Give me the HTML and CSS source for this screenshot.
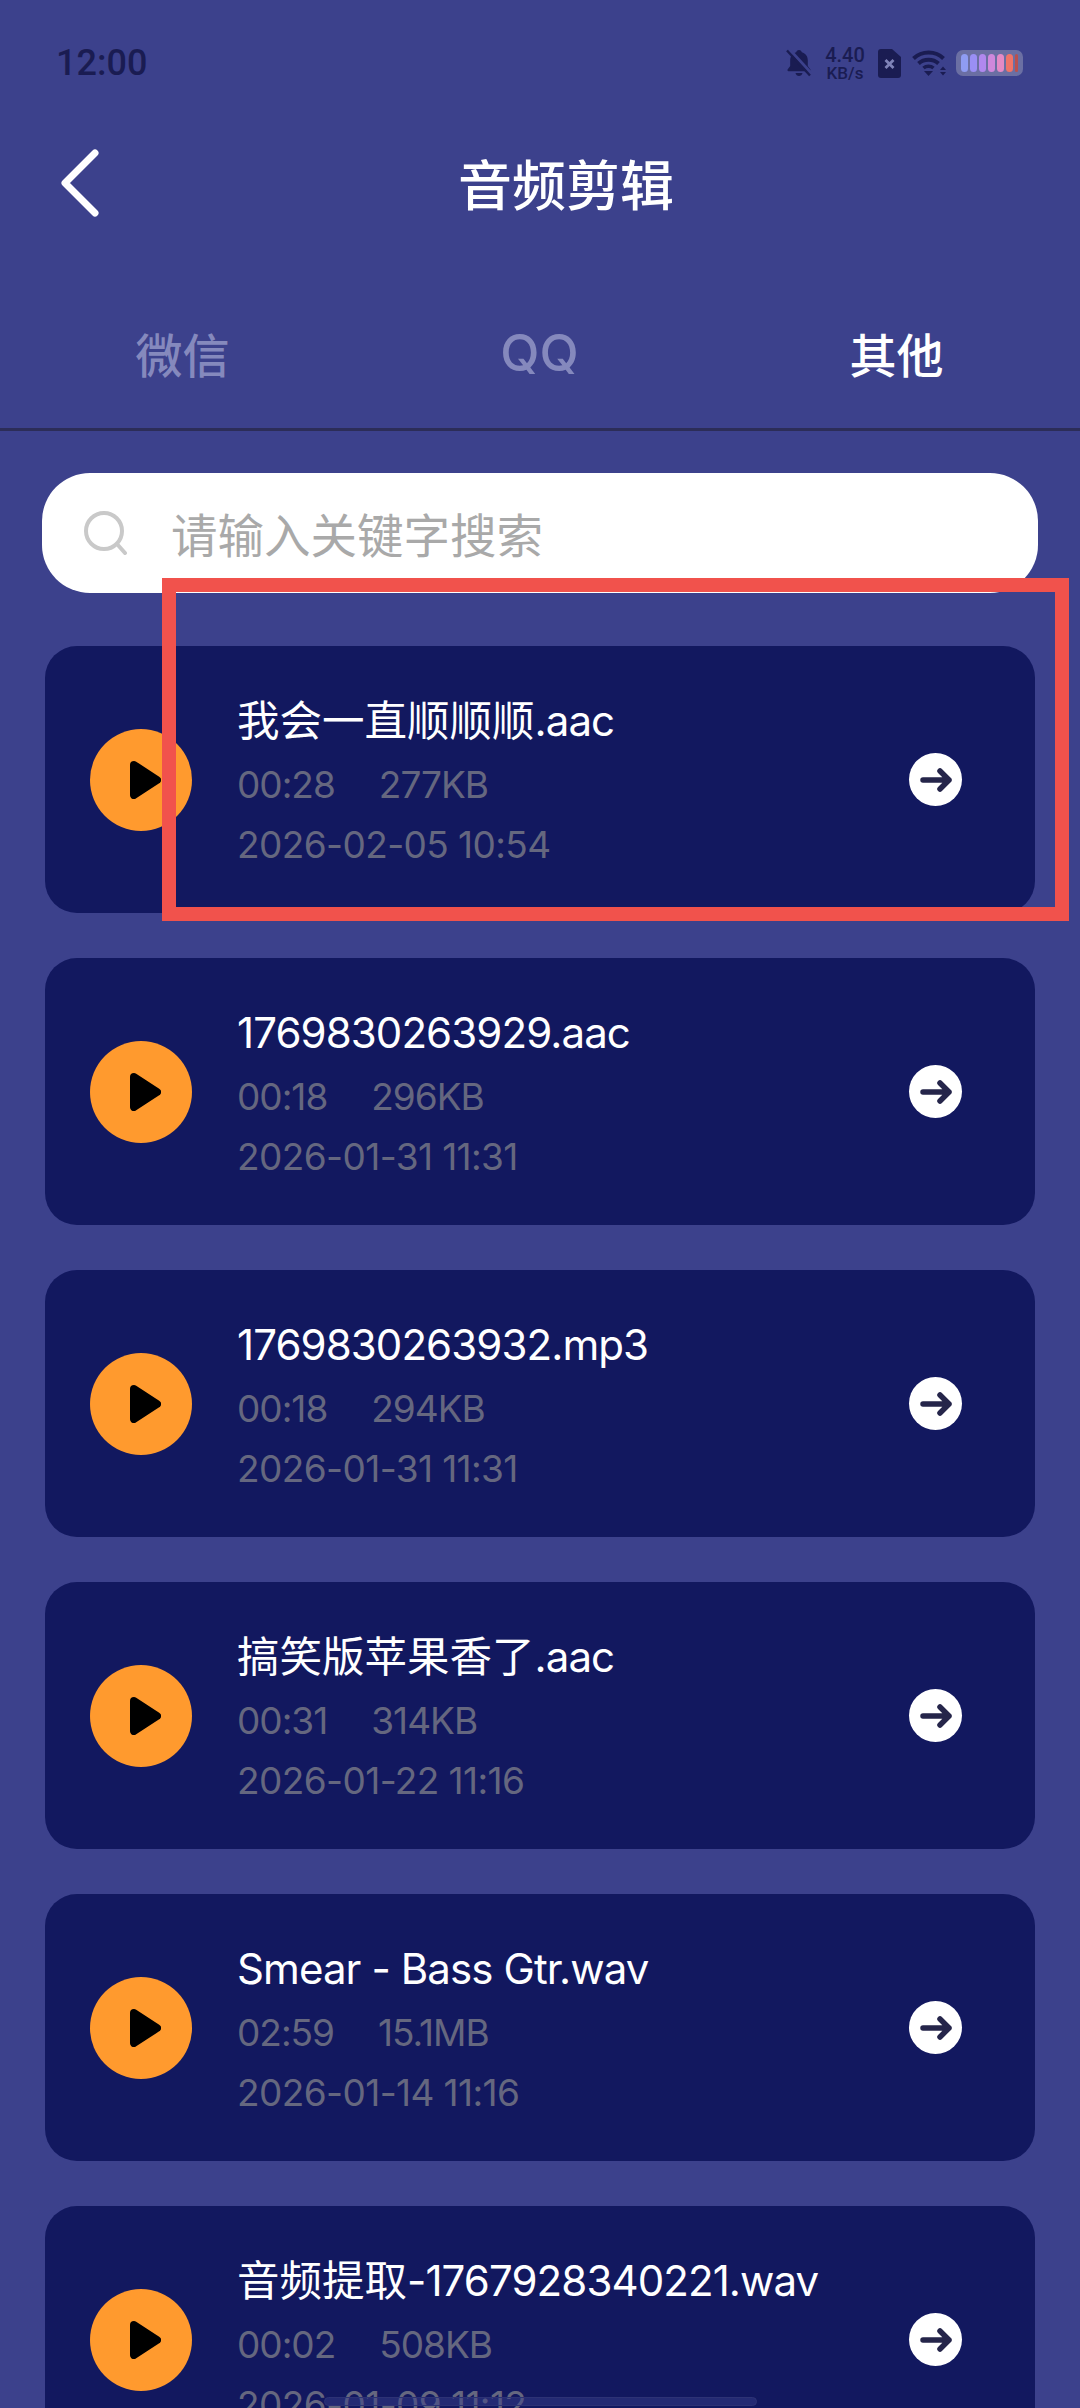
FILE: index.html
```html
<!DOCTYPE html>
<html lang="zh-CN">
<head>
    <meta charset="UTF-8">
    <meta name="viewport" content="width=device-width, initial-scale=1.0">
    <title>音频剪辑</title>
    <link rel="stylesheet" href="styles.css">
</head>
<body>
    <div class="screen">
        <div class="status-bar">
            <span class="status-time">12:00</span>
            <div class="status-icons">
                <svg class="icon-bell" width="26" height="28" viewBox="0 0 26 28">
                    <path d="M13 1c1.600 0 2.600 1 2.800 2.300 3.800 1 6 4.200 6 8.200v5.500l2.600 3.600c.5.800 0 1.600-.9 1.600H2.500c-.9 0-1.400-.8-.9-1.600L4.200 17v-5.500c0-4 2.200-7.200 6-8.200C10.400 2 11.400 1 13 1z" fill="#1a1c52"/>
                    <path d="M9.500 24h7c-.4 1.800-1.800 3-3.500 3s-3.100-1.200-3.500-3z" fill="#1a1c52"/>
                    <path d="M3 0l23 25" stroke="#3c418c" stroke-width="3"/>
                    <path d="M1 1.500l23 25" stroke="#1a1c52" stroke-width="2.400"/>
                </svg>
                <div class="net-speed">
                    <span class="net-value">4.40</span>
                    <span class="net-unit">KB/s</span>
                </div>
                <svg class="icon-sim" width="23" height="29" viewBox="0 0 23 29">
                    <path d="M3 0h11l9 8v18a3 3 0 0 1-3 3H3a3 3 0 0 1-3-3V3a3 3 0 0 1 3-3z" fill="#1a1c52"/>
                    <path d="M7.500 11l8 8M15.500 11l-8 8" stroke="#7f83b8" stroke-width="2.800"/>
                </svg>
                <svg class="icon-wifi" width="35" height="26" viewBox="0 0 35 26">
                    <path d="M1.500 8.500c8.500-8 22-8 30 0" fill="none" stroke="#1a1c52" stroke-width="4"/>
                    <path d="M6.500 13.500c5.500-5 14.500-5 20 0" fill="none" stroke="#1a1c52" stroke-width="4"/>
                    <path d="M11.500 18c2.800-2.400 7.200-2.400 10 0" fill="none" stroke="#1a1c52" stroke-width="3.600"/>
                    <path d="M12 21h9l-4.500 5z" fill="#1a1c52"/>
                    <path d="M28 20l3-3.500 3 3.500zM28 22l3 3.500 3-3.500z" fill="#1a1c52"/>
                </svg>
                <div class="battery">
                    <span class="battery-cell cell-1"></span>
                    <span class="battery-cell cell-2"></span>
                    <span class="battery-cell cell-3"></span>
                    <span class="battery-cell cell-4"></span>
                    <span class="battery-cell cell-5"></span>
                    <span class="battery-cell cell-6"></span>
                    <span class="battery-cell cell-7"></span>
                </div>
            </div>
        </div>

        <div class="title-bar">
            <svg class="back-icon" width="40" height="68" viewBox="0 0 40 68">
                <path d="M35 4L5 34l30 30" fill="none" stroke="#ffffff" stroke-width="7" stroke-linecap="round" stroke-linejoin="round"/>
            </svg>
            <h1 class="page-title">音频剪辑</h1>
        </div>

        <div class="tabs">
            <span class="tab">微信</span>
            <span class="tab tab-latin">QQ</span>
            <span class="tab tab-active">其他</span>
        </div>

        <div class="search-box">
            <svg class="search-icon" width="46" height="44" viewBox="0 0 46 44">
                <circle cx="21" cy="20" r="18" fill="none" stroke="#c9c9c9" stroke-width="4"/>
                <path d="M34 33l8 9" stroke="#c9c9c9" stroke-width="4" stroke-linecap="round"/>
            </svg>
            <span class="search-placeholder">请输入关键字搜索</span>
        </div>

        <div class="audio-list">
            <div class="audio-card">
                <div class="play-btn"><svg width="32" height="38" viewBox="0 0 32 38"><path d="M5 4l23 15L5 34z" stroke="#000" stroke-width="8" stroke-linejoin="round"/></svg></div>
                <div class="audio-info">
                    <div class="audio-name"><span class="cjk">我会一直顺顺顺</span>.aac</div>
                    <div class="audio-meta"><span>00:28</span><span>277KB</span></div>
                    <div class="audio-date">2026-02-05 10:54</div>
                </div>
                <div class="go-btn"><svg width="34" height="26" viewBox="0 0 34 26"><path d="M4 13h26M21 4l9 9-9 9" fill="none" stroke="#25254a" stroke-width="5.500" stroke-linecap="round" stroke-linejoin="round"/></svg></div>
            </div>
            <div class="audio-card">
                <div class="play-btn"><svg width="32" height="38" viewBox="0 0 32 38"><path d="M5 4l23 15L5 34z" stroke="#000" stroke-width="8" stroke-linejoin="round"/></svg></div>
                <div class="audio-info">
                    <div class="audio-name">1769830263929.aac</div>
                    <div class="audio-meta"><span>00:18</span><span>296KB</span></div>
                    <div class="audio-date">2026-01-31 11:31</div>
                </div>
                <div class="go-btn"><svg width="34" height="26" viewBox="0 0 34 26"><path d="M4 13h26M21 4l9 9-9 9" fill="none" stroke="#25254a" stroke-width="5.500" stroke-linecap="round" stroke-linejoin="round"/></svg></div>
            </div>
            <div class="audio-card">
                <div class="play-btn"><svg width="32" height="38" viewBox="0 0 32 38"><path d="M5 4l23 15L5 34z" stroke="#000" stroke-width="8" stroke-linejoin="round"/></svg></div>
                <div class="audio-info">
                    <div class="audio-name">1769830263932.mp3</div>
                    <div class="audio-meta"><span>00:18</span><span>294KB</span></div>
                    <div class="audio-date">2026-01-31 11:31</div>
                </div>
                <div class="go-btn"><svg width="34" height="26" viewBox="0 0 34 26"><path d="M4 13h26M21 4l9 9-9 9" fill="none" stroke="#25254a" stroke-width="5.500" stroke-linecap="round" stroke-linejoin="round"/></svg></div>
            </div>
            <div class="audio-card">
                <div class="play-btn"><svg width="32" height="38" viewBox="0 0 32 38"><path d="M5 4l23 15L5 34z" stroke="#000" stroke-width="8" stroke-linejoin="round"/></svg></div>
                <div class="audio-info">
                    <div class="audio-name"><span class="cjk">搞笑版苹果香了</span>.aac</div>
                    <div class="audio-meta"><span>00:31</span><span>314KB</span></div>
                    <div class="audio-date">2026-01-22 11:16</div>
                </div>
                <div class="go-btn"><svg width="34" height="26" viewBox="0 0 34 26"><path d="M4 13h26M21 4l9 9-9 9" fill="none" stroke="#25254a" stroke-width="5.500" stroke-linecap="round" stroke-linejoin="round"/></svg></div>
            </div>
            <div class="audio-card">
                <div class="play-btn"><svg width="32" height="38" viewBox="0 0 32 38"><path d="M5 4l23 15L5 34z" stroke="#000" stroke-width="8" stroke-linejoin="round"/></svg></div>
                <div class="audio-info">
                    <div class="audio-name">Smear - Bass Gtr.wav</div>
                    <div class="audio-meta"><span>02:59</span><span>15.1MB</span></div>
                    <div class="audio-date">2026-01-14 11:16</div>
                </div>
                <div class="go-btn"><svg width="34" height="26" viewBox="0 0 34 26"><path d="M4 13h26M21 4l9 9-9 9" fill="none" stroke="#25254a" stroke-width="5.500" stroke-linecap="round" stroke-linejoin="round"/></svg></div>
            </div>
            <div class="audio-card">
                <div class="play-btn"><svg width="32" height="38" viewBox="0 0 32 38"><path d="M5 4l23 15L5 34z" stroke="#000" stroke-width="8" stroke-linejoin="round"/></svg></div>
                <div class="audio-info">
                    <div class="audio-name"><span class="cjk">音频提取</span>-1767928340221.wav</div>
                    <div class="audio-meta"><span>00:02</span><span>508KB</span></div>
                    <div class="audio-date">2026-01-09 11:12</div>
                </div>
                <div class="go-btn"><svg width="34" height="26" viewBox="0 0 34 26"><path d="M4 13h26M21 4l9 9-9 9" fill="none" stroke="#25254a" stroke-width="5.500" stroke-linecap="round" stroke-linejoin="round"/></svg></div>
            </div>
        </div>

        <div class="highlight-frame"></div>
        <div class="home-indicator"></div>
    </div>
</body>
</html>
```

FILE: styles.css
```css
html, body {
    margin: 0;
    padding: 0;
    background-color: #3c418c;
}
.screen {
    position: relative;
    width: 1080px;
    height: 2408px;
    overflow: hidden;
    background-color: #3c418c;
    font-family: Inter, "Noto Sans CJK SC", sans-serif;
}
.status-bar {
    display: flex;
    justify-content: space-between;
    align-items: center;
    height: 126px;
    padding: 0 57px 0 56px;
    box-sizing: border-box;
}
.status-time {
    font-family: Roboto, sans-serif;
    font-size: 36px;
    font-weight: 500;
    color: #1a1c52;
}
.status-icons {
    display: flex;
    align-items: center;
    height: 40px;
}
.icon-bell {
    margin-right: 10px;
}
.net-speed {
    display: flex;
    flex-direction: column;
    align-items: center;
    width: 46px;
    margin-right: 10px;
    font-family: Roboto, sans-serif;
    color: #1a1c52;
    font-weight: 500;
}
.net-value {
    font-size: 20px;
    line-height: 20px;
}
.net-unit {
    font-size: 17px;
    line-height: 17px;
}
.icon-sim {
    margin-right: 11px;
}
.icon-wifi {
    margin-right: 9px;
}
.battery {
    display: flex;
    gap: 2px;
    width: 67px;
    height: 26px;
    padding: 4px 4px 4px 5px;
    box-sizing: border-box;
    border-radius: 7px;
    background-color: #6b6fa3;
}
.battery-cell {
    width: 7px;
    border-radius: 4px;
}
.cell-1 { background-color: #8f9cf2; }
.cell-2 { background-color: #9a8ff5; }
.cell-3 { background-color: #b088ee; }
.cell-4 { background-color: #cf88dc; }
.cell-5 { background-color: #e48ac6; }
.cell-6 { background-color: #ef7468; }
.cell-7 { background-color: #b8504e; width: 3px; }
.title-bar {
    position: relative;
    display: flex;
    justify-content: center;
    align-items: center;
    height: 114px;
    padding: 0 0 2px 52px;
    box-sizing: border-box;
}
.back-icon {
    position: absolute;
    left: 60px;
    top: 23px;
}
.page-title {
    margin: 0;
    font-size: 54px;
    font-weight: 500;
    color: #ffffff;
}
.tabs {
    display: grid;
    grid-template-columns: repeat(3, 357px);
    justify-items: center;
    align-items: center;
    height: 191px;
    padding: 36px 0 0 4px;
    box-sizing: border-box;
    border-bottom: 3px solid #2c2d58;
}
.tab {
    font-size: 47px;
    font-weight: 500;
    color: #8589bd;
}
.tab-latin {
    font-size: 51px;
}
.tab-active {
    color: #ffffff;
}
.search-box {
    display: flex;
    align-items: center;
    height: 120px;
    margin: 42px 42px 0;
    padding-left: 41px;
    border-radius: 48px;
    background-color: #ffffff;
}
.search-icon {
    margin-right: 42px;
}
.search-placeholder {
    margin-bottom: 2px;
    font-size: 46.500px;
    color: #a9a9a9;
}
.audio-list {
    display: flex;
    flex-direction: column;
    gap: 45px;
    margin: 53px 45px 0;
}
.audio-card {
    display: flex;
    align-items: center;
    flex-shrink: 0;
    height: 267px;
    padding: 0 73px 0 45px;
    box-sizing: border-box;
    border-radius: 32px;
    background-color: #12185f;
}
.play-btn {
    display: flex;
    justify-content: center;
    align-items: center;
    flex-shrink: 0;
    width: 102px;
    height: 102px;
    margin-right: 45px;
    border-radius: 50%;
    background-color: #ff9a2e;
}
.play-btn svg {
    margin-left: 7px;
}
.audio-info {
    flex: 1;
    align-self: flex-start;
    padding-top: 45px;
}
.audio-name {
    font-size: 42px;
    line-height: 60px;
    letter-spacing: -0.900px;
    color: #ffffff;
}
.cjk {
    font-size: 42.500px;
    letter-spacing: 0;
}
.audio-meta {
    display: flex;
    gap: 44px;
    margin-top: 4px;
    font-size: 37px;
    line-height: 60px;
    letter-spacing: -1px;
    color: #65677f;
}
.audio-date {
    font-size: 37px;
    line-height: 60px;
    letter-spacing: -0.600px;
    color: #65677f;
}
.go-btn {
    display: flex;
    justify-content: center;
    align-items: center;
    flex-shrink: 0;
    width: 53px;
    height: 53px;
    border-radius: 50%;
    background-color: #ffffff;
}
.highlight-frame {
    position: absolute;
    left: 162px;
    top: 578px;
    width: 907px;
    height: 343px;
    box-sizing: border-box;
    border: 14px solid #f1524c;
}
.home-indicator {
    position: absolute;
    left: 324px;
    top: 2397px;
    width: 433px;
    height: 9px;
    box-sizing: border-box;
    border-radius: 5px;
    border: 1px solid #2d3275;
    background-color: rgba(60, 65, 140, 0.45);
}
```
